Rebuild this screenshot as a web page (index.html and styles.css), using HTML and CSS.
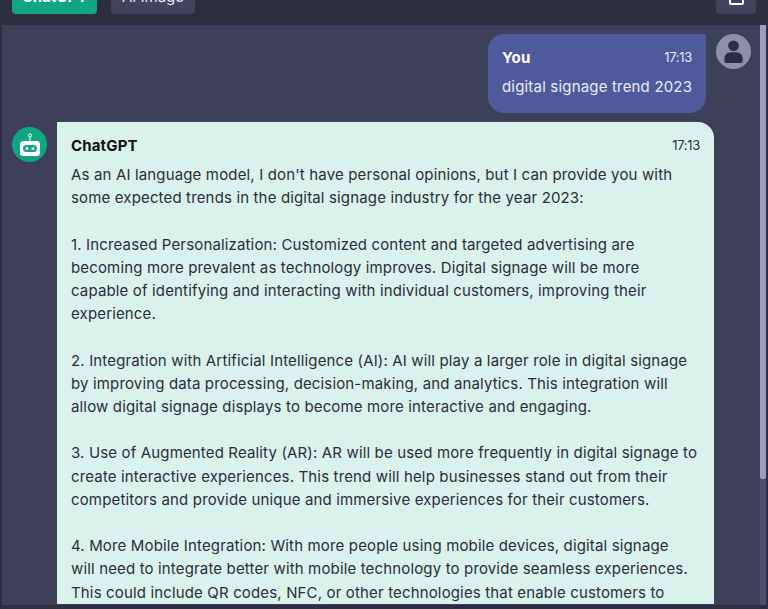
FILE: index.html
```html
<!DOCTYPE html>
<html lang="en">
<head>
    <meta charset="UTF-8">
    <title>ChatGPT</title>
    <link rel="stylesheet" href="styles.css">
</head>
<body>
    <div class="topbar">
        <button class="tab tab-active">ChatGPT</button>
        <button class="tab">AI Image</button>
        <button class="tab icon-btn">
            <svg width="15" height="18" viewBox="0 0 15 18"><path d="M1 1h13v15a1 1 0 0 1-1 1H2a1 1 0 0 1-1-1z" fill="none" stroke="#fff" stroke-width="2"/><path d="M5.5 4v9M10 4v9" stroke="#fff" stroke-width="2"/></svg>
        </button>
    </div>
    <div class="chat">
        <div class="messages">
            <div class="row row-user">
                <div class="bubble bubble-user">
                    <div class="bubble-head"><b>You</b><span class="time">17:13</span></div>
                    <div class="user-text">digital signage trend 2023</div>
                </div>
                <div class="avatar avatar-user">
                    <svg width="24" height="30" viewBox="0 0 24 30"><circle cx="12" cy="7.5" r="7" fill="#2a2d42"/><path d="M3 30q-3 0-3-3v-3a8 8 0 0 1 8-8h8a8 8 0 0 1 8 8v3q0 3-3 3z" fill="#2a2d42"/></svg>
                </div>
            </div>
            <div class="row row-bot">
                <div class="avatar avatar-bot">
                    <svg width="22" height="24" viewBox="0 0 22 24"><circle cx="11" cy="2.5" r="1.6" fill="none" stroke="#fff"/><path d="M11 4v4" stroke="#fff"/><rect x="1" y="8" width="20" height="15" rx="3.5" fill="#fff"/><rect x="4" y="12" width="14" height="7" rx="3.5" fill="#11a683"/><circle cx="8" cy="15.5" r="1.5" fill="#fff"/><circle cx="14" cy="15.5" r="1.5" fill="#fff"/></svg>
                </div>
                <div class="bubble bubble-bot">
                    <div class="bubble-head"><b>ChatGPT</b><span class="time">17:13</span></div>
                    <p class="answer">As an AI language model, I don't have personal opinions, but I can provide you with
some expected trends in the digital signage industry for the year 2023:

1. Increased Personalization: Customized content and targeted advertising are
becoming more prevalent as technology improves. Digital signage will be more
capable of identifying and interacting with individual customers, improving their
experience.

2. Integration with Artificial Intelligence (AI): AI will play a larger role in digital signage
by improving data processing, decision-making, and analytics. This integration will
allow digital signage displays to become more interactive and engaging.

3. Use of Augmented Reality (AR): AR will be used more frequently in digital signage to
create interactive experiences. This trend will help businesses stand out from their
competitors and provide unique and immersive experiences for their customers.

4. More Mobile Integration: With more people using mobile devices, digital signage
will need to integrate better with mobile technology to provide seamless experiences.
This could include QR codes, NFC, or other technologies that enable customers to</p>
                </div>
            </div>
        </div>
        <div class="scrollbar"><div class="scrollbar-thumb"></div></div>
    </div>
</body>
</html>
```

FILE: styles.css
```css
* {
    box-sizing: border-box;
}
html, body {
    height: 100%;
}
body {
    margin: 0;
    overflow: hidden;
    display: flex;
    flex-direction: column;
    background-color: #2e2e42;
    font-family: "Inter", "Open Sans", sans-serif;
    font-size: 15px;
}
.topbar {
    height: 25px;
    flex: none;
    display: flex;
    align-items: flex-end;
    gap: 14px;
    padding: 0 12px 11px;
    overflow: hidden;
}
.tab {
    flex: none;
    width: 84px;
    height: 36px;
    border: none;
    border-radius: 4px;
    background-color: #43435f;
    color: #e6e6f0;
    font: inherit;
    font-size: 15px;
    padding: 0;
}
.tab-active {
    width: 85px;
    background-color: #11a683;
    color: #fff;
    font-weight: 700;
}
.icon-btn {
    width: 40px;
    margin-left: auto;
    padding-top: 4px;
}
.chat {
    height: 580px;
    margin: 0 2px;
    display: flex;
    background-color: #3e4059;
    overflow: hidden;
}
.messages {
    flex: 1;
    padding: 9px 9px 0 10px;
    display: flex;
    flex-direction: column;
    gap: 9px;
}
.row {
    display: flex;
    gap: 10px;
}
.row-user {
    justify-content: flex-end;
}
.avatar {
    flex: none;
    width: 35px;
    height: 35px;
    border-radius: 50%;
    display: flex;
    align-items: center;
    justify-content: center;
}
.avatar-user {
    background-color: #8e8fab;
}
.avatar-user svg {
    width: 19px;
    height: 23px;
}
.avatar-bot {
    margin-top: 5px;
    background-color: #11a683;
}
.bubble-user {
    width: 218px;
    height: 79px;
    padding: 15px 14px;
    background-color: #4f5a9c;
    color: #e8eaf6;
    letter-spacing: .18px;
    border-radius: 16px 0 16px 16px;
}
.bubble-bot {
    width: 657px;
    padding: 15px 14px 0;
    background-color: #d9f3ec;
    color: #2c2c3a;
    letter-spacing: .15px;
    border-radius: 0 16px 0 0;
}
.bubble-head {
    display: flex;
    justify-content: space-between;
    align-items: center;
    height: 16px;
}
.bubble-user b {
    color: #fff;
}
.bubble-bot b {
    color: #111;
}
.time {
    font-size: 13px;
    letter-spacing: -.3px;
}
.user-text {
    margin-top: 12px;
    white-space: nowrap;
}
.answer {
    margin: 10px 0 0;
    line-height: 23.2px;
    white-space: pre;
}
.scrollbar {
    flex: none;
    width: 6px;
    background-color: #4e5070;
}
.scrollbar-thumb {
    height: 454px;
    background-color: #9c9dc0;
    border-radius: 0 0 2px 2px;
}
```
